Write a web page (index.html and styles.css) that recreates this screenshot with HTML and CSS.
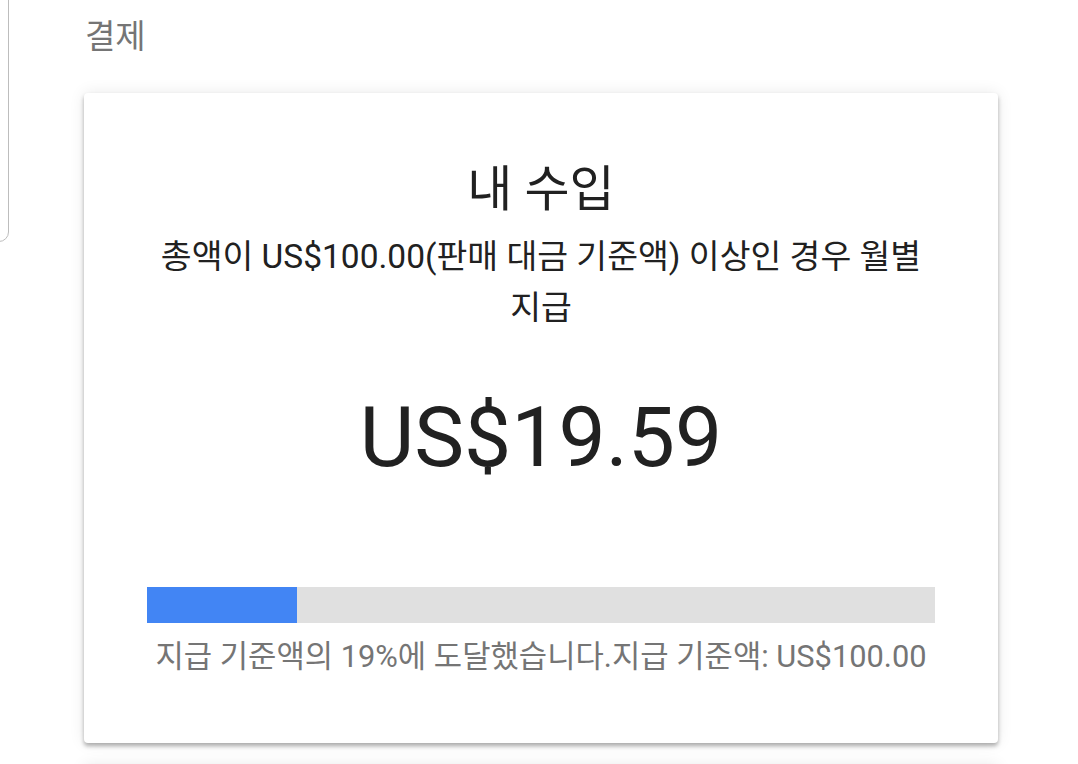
FILE: index.html
```html
<!DOCTYPE html>
<html lang="ko">
<head>
<meta charset="utf-8">
<title>결제</title>
<link rel="stylesheet" href="styles.css">
</head>
<body>
<div class="side-panel"></div>
<main class="page">
  <h1 class="page-title">결제</h1>
  <section class="card">
    <h2 class="card-title">내 수입</h2>
    <p class="card-sub">총액이 US$100.00(판매 대금 기준액) 이상인 경우 월별 지급</p>
    <div class="amount">US$19.59</div>
    <div class="progress"><div class="progress-fill" style="width:19%"></div></div>
    <p class="progress-note">지급 기준액의 19%에 도달했습니다.지급 기준액: US$100.00</p>
  </section>
  <section class="card card-next"></section>
</main>
</body>
</html>
```

FILE: styles.css
```css
html, body {
  margin: 0;
  padding: 0;
  background: #ffffff;
  overflow: hidden;
  height: 764px;
}
body {
  font-family: Roboto, "Noto Sans CJK KR", sans-serif;
  color: #212121;
  position: relative;
}
.side-panel {
  position: absolute;
  left: -300px;
  top: -12px;
  width: 309px;
  height: 254px;
  border: 1.5px solid #bdbdbd;
  border-radius: 10px;
  box-sizing: border-box;
}
.page {
  display: flex;
  flex-direction: column;
  padding: 17px 80px 0 84px;
}
.page-title {
  margin: 0 0 36px 1px;
  font-size: 33px;
  line-height: 40px;
  font-weight: 400;
  color: #757575;
}
.card {
  width: 914px;
  box-sizing: border-box;
  background: #fff;
  border-radius: 4px;
  box-shadow: 0 3px 4px rgba(0, 0, 0, 0.3), 0 0 16px rgba(0, 0, 0, 0.09);
  padding: 67px 63px 66px;
  display: flex;
  flex-direction: column;
  align-items: stretch;
  text-align: center;
}
.card-title {
  margin: 0;
  font-size: 49px;
  line-height: 60px;
  font-weight: 400;
  color: #212121;
}
.card-sub {
  margin: 11px 0 0;
  font-size: 33.5px;
  line-height: 51px;
  color: #212121;
}
.amount {
  margin-top: 55px;
  font-size: 84px;
  line-height: 100px;
  color: #212121;
}
.progress {
  margin-top: 99px;
  height: 36px;
  background: #e0e0e0;
  display: flex;
}
.progress-fill {
  background: #4285f4;
  height: 100%;
}
.progress-note {
  margin: 14px 0 0;
  font-size: 30.8px;
  line-height: 40px;
  color: #757575;
  white-space: nowrap;
}
.card-next {
  margin-top: 22px;
  height: 100px;
  padding: 0;
}
```
